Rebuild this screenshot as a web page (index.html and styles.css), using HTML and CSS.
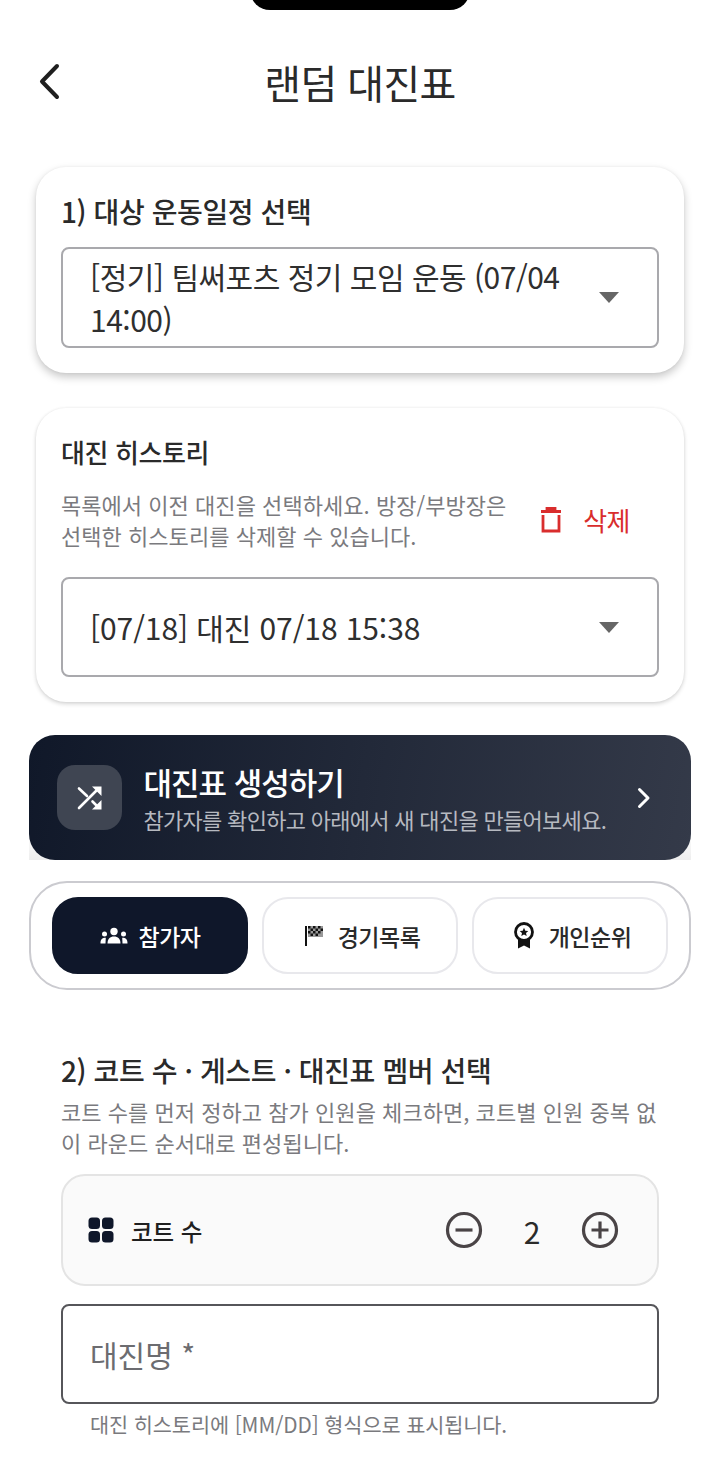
FILE: index.html
```html
<!DOCTYPE html>
<html lang="ko">
<head>
<meta charset="utf-8">
<title>랜덤 대진표</title>
<link rel="stylesheet" href="styles.css">
</head>
<body>
<div class="notch"></div>
<header class="header">
  <svg class="back" width="28" height="40" viewBox="0 0 28 40"><path d="M21 5 L6 20.5 L21 36" fill="none" stroke="#1f1f1f" stroke-width="4" stroke-linecap="round" stroke-linejoin="round"/></svg>
  <h1 class="page-title">랜덤 대진표</h1>
</header>
<section class="card card-first">
  <h2 class="card-title">1) 대상 운동일정 선택</h2>
  <div class="select select-multi">
    <span class="select-text">[정기] 팀써포츠 정기 모임 운동 (07/04 14:00)</span>
    <span class="caret"></span>
  </div>
</section>
<section class="card card-second">
  <h2 class="card-title small">대진 히스토리</h2>
  <div class="history-row">
    <p class="hint">목록에서 이전 대진을 선택하세요. 방장/부방장은 선택한 히스토리를 삭제할 수 있습니다.</p>
    <div class="delete">
      <svg width="24" height="28" viewBox="0 0 24 28"><path d="M2 5.500H22M8 5.500V2.500H16V5.500M4 9V25H20V9" fill="none" stroke="#d92d2d" stroke-width="2.800"/></svg>
      <span>삭제</span>
    </div>
  </div>
  <div class="select">
    <span class="select-text">[07/18] 대진 07/18 15:38</span>
    <span class="caret"></span>
  </div>
</section>
<div class="banner-wrap">
  <div class="banner">
    <div class="banner-icon">
      <svg width="28" height="28" viewBox="0 0 28 28"><g fill="none" stroke="#fff" stroke-width="2.600" stroke-linecap="round"><path d="M3 24L22 5"/><path d="M3 4.500L11 12"/><path d="M16.500 17.500L22 23"/></g><path d="M16 2.500H25.500V12Z" fill="#fff"/><path d="M25.500 16V25.500H16Z" fill="#fff"/></svg>
    </div>
    <div class="banner-text">
      <div class="banner-title">대진표 생성하기</div>
      <div class="banner-sub">참가자를 확인하고 아래에서 새 대진을 만들어보세요.</div>
    </div>
    <svg class="banner-arrow" width="16" height="24" viewBox="0 0 16 24"><path d="M3.500 3.500L12 12L3.500 20.500" fill="none" stroke="#fff" stroke-width="3" stroke-linecap="round" stroke-linejoin="round"/></svg>
  </div>
</div>
<nav class="tabs">
  <div class="tab active">
    <svg width="28" height="18" viewBox="0 0 28 18"><g fill="#fff"><circle cx="14" cy="4.500" r="3.700"/><circle cx="4.500" cy="7" r="2.500"/><circle cx="23.500" cy="7" r="2.500"/><path d="M7.500 16.500C7.500 12 10 9.500 14 9.500S20.500 12 20.500 16.500Z"/><path d="M0.500 16.500C0.500 12.500 2 10.800 5.800 10.800C5.800 12.500 5.500 14.500 5.500 16.500Z"/><path d="M27.500 16.500C27.500 12.500 26 10.800 22.200 10.800C22.200 12.500 22.500 14.500 22.500 16.500Z"/></g></svg>
    <span>참가자</span>
  </div>
  <div class="tab">
    <svg class="flag" width="20" height="24" viewBox="0 0 20 24"><rect x="1" y="2" width="2" height="20" fill="#111"/><rect x="4" y="2" width="15" height="11" fill="#999"/><g fill="#111"><rect x="4" y="2" width="2.500" height="2.500"/><rect x="9" y="2" width="2.500" height="2.500"/><rect x="14" y="2" width="2.500" height="2.500"/><rect x="6.500" y="4.500" width="2.500" height="2.500"/><rect x="11.500" y="4.500" width="2.500" height="2.500"/><rect x="16.500" y="4.500" width="2.500" height="2.500"/><rect x="4" y="7" width="2.500" height="2.500"/><rect x="9" y="7" width="2.500" height="2.500"/><rect x="14" y="7" width="2.500" height="2.500"/><rect x="6.500" y="9.500" width="2.500" height="2.500"/><rect x="11.500" y="9.500" width="2.500" height="2.500"/></g></svg>
    <span>경기목록</span>
  </div>
  <div class="tab">
    <svg width="22" height="28" viewBox="0 0 22 28"><path d="M5 16V26.500L11 23.500L17 26.500V16Z" fill="#111"/><circle cx="11" cy="10" r="8.500" fill="#fff" stroke="#111" stroke-width="2.800"/><path d="M11 5.800L12.300 8.700L15.300 9L13 11L13.700 14L11 12.400L8.300 14L9 11L6.700 9L9.700 8.700Z" fill="#111"/></svg>
    <span>개인순위</span>
  </div>
</nav>
<section class="members">
  <h2 class="card-title members-title">2) 코트 수 · 게스트 · 대진표 멤버 선택</h2>
  <p class="hint members-hint">코트 수를 먼저 정하고 참가 인원을 체크하면, 코트별 인원 중복 없이 라운드 순서대로 편성됩니다.</p>
  <div class="stepper">
    <svg width="26" height="26" viewBox="0 0 26 26"><g fill="#0f172a"><rect x="0.500" y="0.500" width="11.500" height="11.500" rx="3.500"/><rect x="14" y="0.500" width="11.500" height="11.500" rx="3.500"/><rect x="0.500" y="14" width="11.500" height="11.500" rx="3.500"/><rect x="14" y="14" width="11.500" height="11.500" rx="3.500"/></g></svg>
    <span class="stepper-label">코트 수</span>
    <svg class="stepper-btn" width="38" height="38" viewBox="0 0 38 38"><circle cx="19" cy="19" r="16.500" fill="none" stroke="#4a4446" stroke-width="3.200"/><path d="M10.500 19H27.500" stroke="#4a4446" stroke-width="3.200"/></svg>
    <span class="stepper-value">2</span>
    <svg class="stepper-btn" width="38" height="38" viewBox="0 0 38 38"><circle cx="19" cy="19" r="16.500" fill="none" stroke="#4a4446" stroke-width="3.200"/><path d="M10.500 19H27.500M19 10.500V27.500" stroke="#4a4446" stroke-width="3.200"/></svg>
  </div>
  <div class="input">대진명 *</div>
  <p class="helper">대진 히스토리에 [MM/DD] 형식으로 표시됩니다.</p>
</section>
</body>
</html>
```
FILE: styles.css
```css
* { box-sizing: border-box; }
html, body { margin: 0; padding: 0; }
body {
  width: 720px;
  height: 1461px;
  overflow: hidden;
  background: #fff;
  color: #1f1f1f;
  font-family: "Noto Sans CJK KR", "Noto Sans", sans-serif;
  position: relative;
}
.notch {
  position: absolute;
  top: -30px;
  left: 250px;
  width: 220px;
  height: 40px;
  background: #000;
  border-radius: 22px;
}
.header {
  height: 167px;
  padding-top: 36px;
  display: flex;
  justify-content: center;
  position: relative;
}
.back { position: absolute; left: 36px; top: 61px; }
.page-title {
  margin: 0;
  font-size: 40px;
  font-weight: 400;
  line-height: 92px;
  height: 92px;
  letter-spacing: -0.6px;
  color: #2a2a2a;
}
.card {
  margin: 0 36px;
  background: #fff;
  border-radius: 30px;
  padding: 0 25px;
  box-shadow: 0 4px 8px rgba(0,0,0,.22), 0 0 3px rgba(0,0,0,.05);
}
.card-first { height: 206px; padding-top: 22px; }
.card-second {
  height: 294px;
  margin-top: 35px;
  padding-top: 24px;
  box-shadow: 0 2px 4px rgba(0,0,0,.16), 0 0 3px rgba(0,0,0,.06);
}
.card-title {
  margin: 0;
  font-size: 28px;
  font-weight: 500;
  line-height: 44px;
  letter-spacing: -0.4px;
  color: #2a2a2a;
}
.card-title.small { font-size: 26px; line-height: 40px; }
.select {
  margin: 14px 0 0;
  height: 100px;
  border: 2px solid #a9a9ad;
  border-radius: 8px;
  padding: 0 27px;
  display: flex;
  align-items: center;
  justify-content: space-between;
}
.select-multi { height: 101px; }
.select-text {
  font-size: 30px;
  line-height: 43px;
  color: #2f2f2f;
  width: 490px;
  letter-spacing: -0.1px;
}
.select-multi .select-text { letter-spacing: -0.5px; }
.caret {
  width: 0; height: 0;
  margin-right: 11px;
  border-left: 10px solid transparent;
  border-right: 10px solid transparent;
  border-top: 11px solid #666;
}
.history-row {
  margin-top: 17px;
  display: flex;
  align-items: center;
  justify-content: space-between;
}
.hint {
  margin: 0;
  font-size: 22px;
  line-height: 31px;
  color: #7a7a7e;
  letter-spacing: 0.04px;
}
.history-row .hint { width: 456px; }
.delete {
  display: flex;
  align-items: center;
  gap: 20px;
  margin-right: 29px;
  color: #d92d2d;
  font-size: 26px;
  line-height: 40px;
  letter-spacing: -0.5px;
}
.card-second .select { margin-top: 26px; }
.banner-wrap {
  margin: 33px 29px 0;
  background: linear-gradient(to bottom, #fff 75%, #eeeeee);
  border-radius: 26px 26px 0 0;
}
.banner {
  height: 125px;
  border-radius: 26px;
  background: linear-gradient(100deg, #101829, #343a49);
  display: flex;
  align-items: center;
  padding: 0 39px 0 28px;
  color: #fff;
}
.banner-icon {
  width: 65px;
  height: 65px;
  border-radius: 18px;
  background: #3f4552;
  display: flex;
  align-items: center;
  justify-content: center;
  flex: none;
}
.banner-text { margin-left: 21.500px; flex: 1; }
.banner-title {
  font-size: 31px;
  font-weight: 500;
  line-height: 42px;
  letter-spacing: -1px;
}
.banner-sub {
  font-size: 22px;
  line-height: 32px;
  color: #b6b9c0;
  letter-spacing: -0.7px;
}
.tabs {
  margin: 21px 29px 0;
  height: 109px;
  border: 2px solid #cbcbd0;
  border-radius: 38px;
  padding: 14px 21px;
  display: flex;
  gap: 14px;
}
.tab {
  flex: none;
  width: 196px;
  height: 77px;
  border: 2px solid #e8e8ec;
  border-radius: 26px;
  display: flex;
  align-items: center;
  justify-content: center;
  gap: 14px;
  padding-left: 4px;
  font-size: 23px;
  font-weight: 500;
  letter-spacing: -0.5px;
  color: #2a2a2a;
}
.tab.active { background: #0f172a; border-color: #0f172a; color: #fff; gap: 11px; padding-left: 0; }
.members { padding: 60px 61px 0; }
.members-title { font-size: 28px; line-height: 40px; letter-spacing: -0.4px; }
.members-hint { margin-top: 6px; }
.stepper {
  margin-top: 16px;
  height: 112px;
  border: 2px solid #e4e4e4;
  border-radius: 24px;
  background: #fafafa;
  display: flex;
  align-items: center;
  padding: 0 38px 0 25px;
}
.stepper-label {
  margin-left: 17px;
  flex: 1;
  font-size: 23.500px;
  font-weight: 500;
  padding-top: 2px;
}
.stepper-value {
  width: 98px;
  text-align: center;
  font-size: 30px;
  color: #2a2a2a;
  padding-top: 2px;
}
.input {
  margin-top: 18px;
  height: 100px;
  border: 2px solid #56565a;
  border-radius: 8px;
  padding: 0 27px;
  display: flex;
  align-items: center;
  font-size: 30px;
  color: #6c6c70;
}
.helper {
  margin: 4px 0 0 29px;
  font-size: 20.800px;
  line-height: 32px;
  letter-spacing: -0.1px;
  color: #7a7a7e;
}
```
